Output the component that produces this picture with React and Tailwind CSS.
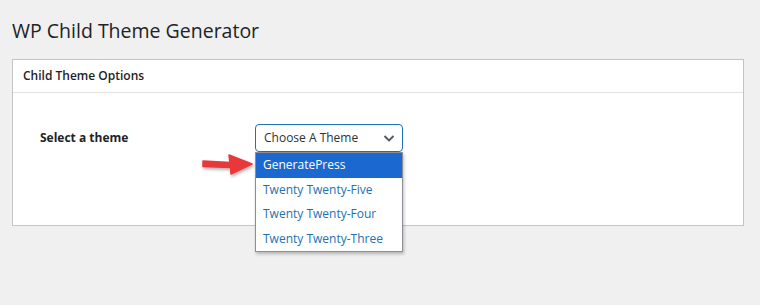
import React from "react";

const themes = ["GeneratePress", "Twenty Twenty-Five", "Twenty Twenty-Four", "Twenty Twenty-Three"];

function Arrow() {
  return (
    <svg className="absolute left-[-56px] top-[-1px]" width="56" height="28" viewBox="0 0 56 28">
      <defs>
        <filter id="sh" x="-20%" y="-40%" width="140%" height="180%">
          <feDropShadow dx="1" dy="2" stdDeviation="1.5" floodColor="#000" floodOpacity="0.3" />
        </filter>
      </defs>
      <path
        d="M3 9 L30 10.5 L29 3 L52 12 L31 22 L30.5 15.5 L3 14.5 Z"
        fill="#e8383b"
        stroke="#e8383b"
        strokeWidth="1.5"
        strokeLinejoin="round"
        filter="url(#sh)"
      />
    </svg>
  );
}

export default function App() {
  return (
    <div className="h-[305px] w-[760px] bg-[#f0f0f0] px-3 pt-[17px] font-['Open_Sans',sans-serif] text-[#1d2327]">
      <h1 className="text-[19.5px] leading-7 font-normal">WP Child Theme Generator</h1>
      <div className="mt-[14px] w-[732px] border border-[#c3c4c7] bg-white">
        <div className="border-b border-[#e2e2e4] px-[10px] py-[7px] text-[12px] font-semibold leading-[18px]">
          Child Theme Options
        </div>
        <div className="flex h-[132px] items-start pt-[31px]">
          <div className="w-[242px] pl-[27px] pt-[5px] text-[12px] font-bold leading-[18px]">Select a theme</div>
          <div className="relative w-[148px]">
            <div className="flex h-[28px] items-center justify-between rounded-[4px] border border-[#2271b1] pl-2 pr-[6px] text-[12px] text-[#2c3338]">
              <span>Choose A Theme</span>
              <svg width="14" height="14" viewBox="0 0 14 14" fill="none" stroke="#50575e" strokeWidth="1.8">
                <path d="M2.5 5 L7 9.5 L11.5 5" />
              </svg>
            </div>
            <div className="absolute left-0 top-[28px] w-[148px] border border-[#8c8f94] bg-white shadow-[1px_2px_3px_rgba(0,0,0,0.25)]">
              {themes.map((t, i) => (
                <div
                  key={t}
                  className={`flex h-[24.5px] items-center px-[7px] text-[12px] ${
                    i === 0 ? "bg-[#1b68d0] text-white" : "text-[#2271b1]"
                  }`}
                >
                  {t}
                </div>
              ))}
              <Arrow />
            </div>
          </div>
        </div>
      </div>
    </div>
  );
}
